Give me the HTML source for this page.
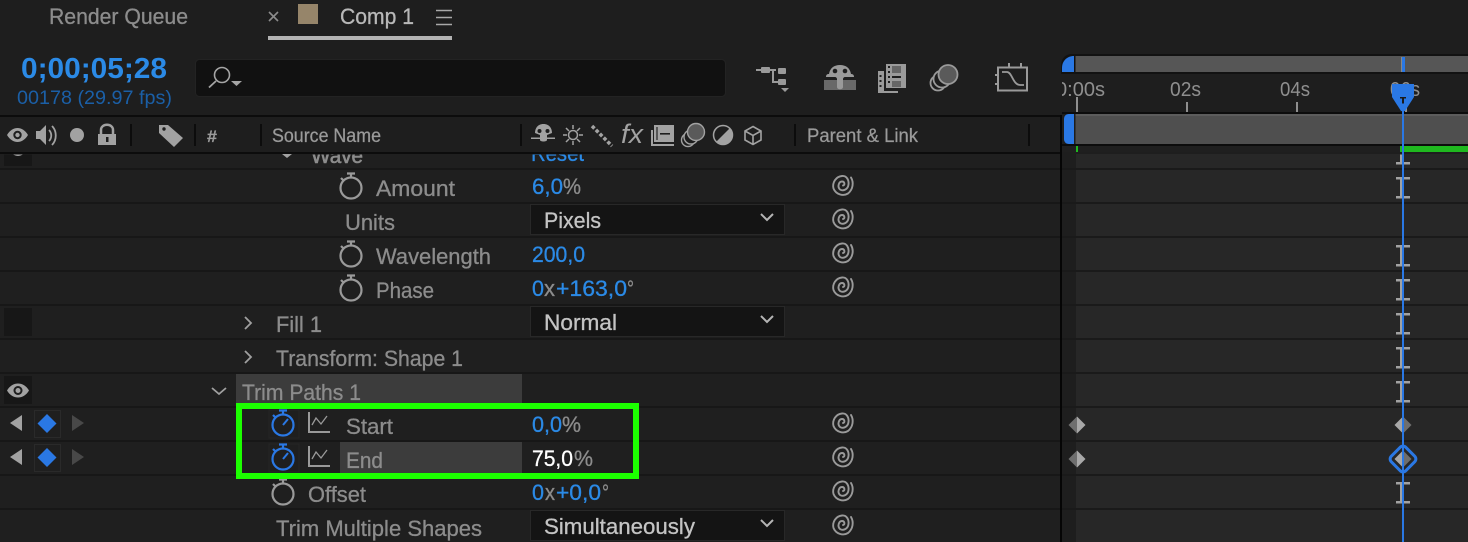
<!DOCTYPE html>
<html><head><meta charset="utf-8"><style>
html,body{margin:0;padding:0;background:#1e1e1e;width:1468px;height:542px;overflow:hidden}
svg{display:block}
text{font-family:"Liberation Sans",sans-serif;font-size:22px}
.g{fill:#8c8c8c;stroke:#8c8c8c;stroke-width:.3}.l{fill:#c4c4c4;stroke:#c4c4c4;stroke-width:.3}.b{fill:#2b8ae6;stroke:#2b8ae6;stroke-width:.3}.d{fill:#9a9a9a;stroke:#9a9a9a;stroke-width:.25}
</style></head><body>
<svg width="1468" height="542" viewBox="0 0 1468 542" xmlns="http://www.w3.org/2000/svg">
<defs>
<g id="sw" fill="none" stroke-width="2.200"><circle cx="0" cy="1" r="10.500"/><path d="M-4 -13.500H4M0 -13.500V-9M-10 -9L-7 -6"/></g>
<g id="sp" fill="none" stroke="#9a9a9a" stroke-width="1.900" stroke-linecap="round"><path d="M8 -8C11 -3 10 4 5 8C0 11 -7 9 -9.500 3C-11 -3 -7 -9 -1 -9.500C4 -10 6 -5 5.500 -1C5 4 0 6 -3 4C-6 1 -4 -4 -1 -4C2 -4 2 0 0 0"/></g>
<g id="ib"><rect x="-7" y="-10" width="14" height="2.500" fill="#a2a2a2"/><rect x="-7" y="9" width="14" height="2.500" fill="#a2a2a2"/><rect x="-3" y="-10" width="3" height="21" fill="#a2a2a2"/></g>
<g id="dd"><rect x="530.500" y="0.500" width="254" height="30" fill="#141414" stroke="#282828"/><path d="M761 10l6 6 6-6" fill="none" stroke="#b5b5b5" stroke-width="2"/></g>
<g id="gr" fill="none" stroke="#9a9a9a" stroke-width="2"><path d="M1 -11V9H22"/><path d="M4 2L8 -5L13 1L19 -7" stroke-width="1.300"/></g>
</defs>

<rect width="1468" height="542" fill="#1e1e1e"/>

<!-- tabs -->
<text x="49" y="24" class="g" textLength="139" lengthAdjust="spacingAndGlyphs">Render Queue</text>
<path d="M269 12l9 9M278 12l-9 9" stroke="#8c8c8c" stroke-width="1.600"/>
<rect x="298" y="4" width="20" height="20" fill="#96856a"/>
<text x="340" y="24" style="fill:#b8b8b8;stroke:#b8b8b8;stroke-width:.3" textLength="74" lengthAdjust="spacingAndGlyphs">Comp 1</text>
<path d="M436 10.500h16M436 17.500h16M436 24.500h16" stroke="#a8a8a8" stroke-width="1.600"/>
<rect x="268" y="36" width="184" height="4" fill="#b3b3b3"/>

<!-- time -->
<text x="21" y="78" font-weight="bold" style="font-size:29px" fill="#2b8ae6" textLength="146" lengthAdjust="spacingAndGlyphs">0;00;05;28</text>
<text x="17" y="104" style="font-size:19px" fill="#1b5fa6" textLength="155" lengthAdjust="spacingAndGlyphs">00178 (29.97 fps)</text>

<!-- search -->
<rect x="195.500" y="59.500" width="530" height="37" rx="4" fill="#111" stroke="#232323"/>
<circle cx="222" cy="75" r="7.500" fill="none" stroke="#a5a5a5" stroke-width="1.600"/>
<path d="M216 81l-7 6.500" stroke="#a5a5a5" stroke-width="1.800"/>
<path d="M231 81h11l-5.500 5z" fill="#a5a5a5"/>

<!-- toolbar icons -->
<g fill="#9a9a9a">
<path d="M756 70h6M770 70h6M773 70v12h6" fill="none" stroke="#9a9a9a" stroke-width="2"/>
<rect x="761" y="67" width="9" height="6" rx="1"/><rect x="778" y="68" width="8" height="6" rx="1"/><rect x="778" y="79" width="8" height="6" rx="1"/>
<path d="M781 88h8l-4 4z"/>
<rect x="824" y="80" width="32" height="10" fill="#696969"/>
<path d="M826 77c0-3 2-3 3-3c1-6 5-9 11-9s10 3 11 9c2 0 3 1 3 3h-9c-1 0-2 1-2 2v8c0 3-6 3-6 0v-8c0-1-1-2-2-2z"/>
<circle cx="835" cy="71" r="2.300" fill="#1e1e1e"/><circle cx="845" cy="71" r="2.300" fill="#1e1e1e"/>
<rect x="886" y="64" width="20" height="24"/>
<path d="M878 71h6v20h14v2h-20z"/><rect x="878" y="71" width="6" height="22"/>
<path d="M892 76h9v2h-9z" fill="#1e1e1e"/><rect x="892" y="66" width="9" height="7" fill="#666"/><rect x="892" y="81" width="9" height="6" fill="#666"/>
<rect x="888" y="66" width="2" height="2" fill="#1e1e1e"/><rect x="888" y="71" width="2" height="2" fill="#1e1e1e"/><rect x="888" y="76" width="2" height="2" fill="#1e1e1e"/><rect x="888" y="81" width="2" height="2" fill="#1e1e1e"/>
<rect x="879.500" y="75" width="2" height="2" fill="#1e1e1e"/><rect x="879.500" y="80" width="2" height="2" fill="#1e1e1e"/><rect x="879.500" y="85" width="2" height="2" fill="#1e1e1e"/>
</g>
<g fill="#1e1e1e" stroke="#9a9a9a" stroke-width="1.800"><circle cx="938" cy="83" r="7.500"/><circle cx="942" cy="79" r="8.500"/></g>
<circle cx="948" cy="74.500" r="9.500" fill="#5a5a5a" stroke="#9a9a9a" stroke-width="1.800"/>
<g fill="none" stroke="#9a9a9a" stroke-width="2"><rect x="998" y="67.500" width="29" height="23"/><path d="M1002 72h5c5 0 6 13 13 13h4" stroke-width="1.800"/><path d="M1009 63v4M1021 63v4M995 75h3M995 84h3"/></g>

<!-- header bar -->
<rect x="0" y="115" width="1062" height="2" fill="#0c0c0c"/>
<rect x="0" y="152" width="1468" height="2.500" fill="#0c0c0c"/>
<g fill="#0c0c0c"><rect x="130" y="124" width="2" height="22"/><rect x="194" y="124" width="2" height="22"/><rect x="260" y="124" width="2" height="22"/><rect x="520" y="124" width="2" height="22"/><rect x="794" y="124" width="2" height="22"/><rect x="1028" y="124" width="2" height="22"/></g>
<!-- eye -->
<path d="M7 135c3-5 7-7 10.500-7s7.500 2 10.500 7c-3 5-7 7-10.500 7s-7.500-2-10.500-7z" fill="#a2a2a2"/><circle cx="17.500" cy="135" r="4.200" fill="#1e1e1e"/><circle cx="17.500" cy="135" r="2.200" fill="#a2a2a2"/>
<!-- audio -->
<path d="M36 131h4l6-6v20l-6-6h-4z" fill="#a2a2a2"/><path d="M49 130c3 3 3 8 0 11M52 126c5 5 5 14 0 19" fill="none" stroke="#a2a2a2" stroke-width="1.800"/>
<circle cx="77" cy="135" r="7" fill="#a2a2a2"/>
<path d="M98 134h18v11h-18z" fill="#a2a2a2"/><path d="M101 134v-4c0-7 12-7 12 0v4" fill="none" stroke="#a2a2a2" stroke-width="2.500"/><rect x="106" y="137" width="2.500" height="5" fill="#1e1e1e"/>
<!-- tag -->
<path d="M159 125h9l15 13l-9 9l-15-14z" fill="#a2a2a2"/><circle cx="164" cy="129" r="1.700" fill="#1e1e1e"/>
<text x="207" y="142" class="d" style="font-size:17px" font-weight="bold" textLength="10" lengthAdjust="spacingAndGlyphs">#</text>
<text x="272" y="142" class="d" style="font-size:19px" textLength="109" lengthAdjust="spacingAndGlyphs">Source Name</text>
<text x="807" y="142" class="d" style="font-size:19px" textLength="111" lengthAdjust="spacingAndGlyphs">Parent &amp; Link</text>
<!-- switch icons -->
<g fill="#a2a2a2">
<path d="M535 133c0-6 4-9 8.500-9s8.500 3 8.500 9l-5 2v5c0 2-7 2-7 0v-5z"/><circle cx="539.500" cy="131" r="2" fill="#1e1e1e"/><circle cx="547.500" cy="131" r="2" fill="#1e1e1e"/><rect x="531" y="137.500" width="9" height="1.500"/><rect x="546" y="137.500" width="9" height="1.500"/>
</g>
<g stroke="#a2a2a2" stroke-width="1.500" fill="none"><circle cx="573" cy="135" r="4.500"/><path d="M573 125v4M573 141v4M563 135h4M579 135h4M566 128l3 3M577 139l3 3M580 128l-3 3M569 139l-3 3"/></g>
<path d="M592 126l20 20" stroke="#a2a2a2" stroke-width="3.500" stroke-dasharray="3.500 2"/>
<text x="621" y="143" fill="#a2a2a2" font-style="italic" style="font-size:27px" textLength="22" lengthAdjust="spacingAndGlyphs">fx</text>
<g fill="#a2a2a2"><rect x="654" y="125" width="20" height="17"/><path d="M651 130h2v14h21v2h-23z"/><rect x="660" y="133" width="10" height="1.600" fill="#1e1e1e"/><rect x="656" y="127" width="2" height="13" fill="#555"/></g>
<g fill="#1e1e1e" stroke="#a2a2a2" stroke-width="1.400"><circle cx="688" cy="140" r="6.500"/><circle cx="691" cy="137" r="7"/></g>
<circle cx="696" cy="132" r="8.500" fill="#5a5a5a" stroke="#a2a2a2" stroke-width="1.400"/>
<circle cx="723" cy="135" r="9.500" fill="#a2a2a2"/><path d="M716.500 141.500a9.200 9.200 0 0 1 13-13z" fill="#1e1e1e"/><circle cx="723" cy="135" r="9.500" fill="none" stroke="#a2a2a2" stroke-width="1.500"/>
<path d="M753 126.500l8 4.500v9l-8 4.500l-8-4.500v-9zM745 131l8 4.500l8-4.500M753 135.500v9" fill="none" stroke="#a2a2a2" stroke-width="1.600"/>

<!-- left rows bg -->
<rect x="0" y="154" width="1060" height="388" fill="#1f1f1f"/>
<g fill="#171717">
<rect x="0" y="168" width="1060" height="2"/><rect x="0" y="202" width="1060" height="2"/><rect x="0" y="236" width="1060" height="2"/><rect x="0" y="270" width="1060" height="2"/><rect x="0" y="304" width="1060" height="2"/><rect x="0" y="338" width="1060" height="2"/><rect x="0" y="372" width="1060" height="2"/><rect x="0" y="406" width="1060" height="2"/><rect x="0" y="440" width="1060" height="2"/><rect x="0" y="474" width="1060" height="2"/><rect x="0" y="508" width="1060" height="2"/>
</g>
<!-- clipped row -->
<clipPath id="c1"><rect x="0" y="154.500" width="1060" height="14"/></clipPath>
<g clip-path="url(#c1)">
<rect x="4" y="154" width="28" height="12" fill="#171717"/>
<path d="M8 149c3-5 7-7 10-7s7 2 10 7c-3 5-7 7-10 7s-7-2-10-7z" fill="#a2a2a2"/>
<text x="311" y="163" class="g" style="font-size:21px;stroke-width:.6" textLength="52" lengthAdjust="spacingAndGlyphs">Wave</text>
<text x="531" y="161" class="b" textLength="53" lengthAdjust="spacingAndGlyphs">Reset</text>
</g>
<path d="M282 154h10l-5 4z" fill="#a2a2a2"/>

<!-- row boxes -->
<rect x="4" y="308" width="28" height="28" fill="#171717"/>
<rect x="4" y="376" width="28" height="28" fill="#171717"/>
<path d="M7 390.500c3-5 7-7 11-7s8 2 11 7c-3 5-7 7-11 7s-8-2-11-7z" fill="#a2a2a2"/><circle cx="18" cy="390.500" r="4.500" fill="#1e1e1e"/><circle cx="18" cy="390.500" r="2.500" fill="#a2a2a2"/>

<!-- stopwatches -->
<use href="#sw" x="351" y="187" stroke="#9a9a9a"/>
<use href="#sw" x="351" y="255" stroke="#9a9a9a"/>
<use href="#sw" x="351" y="289" stroke="#9a9a9a"/>
<use href="#sw" x="283" y="493" stroke="#9a9a9a"/>

<!-- labels -->
<text x="376" y="196" class="g" textLength="79" lengthAdjust="spacingAndGlyphs">Amount</text>
<text x="345" y="230" class="g" textLength="50" lengthAdjust="spacingAndGlyphs">Units</text>
<text x="376" y="264" class="g" textLength="115" lengthAdjust="spacingAndGlyphs">Wavelength</text>
<text x="376" y="298" class="g" textLength="58" lengthAdjust="spacingAndGlyphs">Phase</text>
<text x="276" y="332" class="g" textLength="46" lengthAdjust="spacingAndGlyphs">Fill 1</text>
<text x="276" y="366" class="g" textLength="187" lengthAdjust="spacingAndGlyphs">Transform: Shape 1</text>
<path d="M245 317l6 6-6 6M245 351l6 6-6 6" fill="none" stroke="#a0a0a0" stroke-width="1.800"/>
<path d="M212 388l7 6 7-6" fill="none" stroke="#a0a0a0" stroke-width="1.800"/>

<!-- values -->
<text x="532" y="194" class="b" textLength="31" lengthAdjust="spacingAndGlyphs">6,0</text>
<text x="563" y="194" class="g" textLength="18" lengthAdjust="spacingAndGlyphs">%</text>
<text x="532" y="262" class="b" textLength="53" lengthAdjust="spacingAndGlyphs">200,0</text>
<text x="532" y="296" class="b" textLength="12" lengthAdjust="spacingAndGlyphs">0</text>
<text x="544" y="296" class="g" textLength="11" lengthAdjust="spacingAndGlyphs">x</text>
<text x="556" y="296" class="b" textLength="71" lengthAdjust="spacingAndGlyphs">+163,0</text>
<text x="627" y="296" class="g" textLength="7" lengthAdjust="spacingAndGlyphs">°</text>

<!-- dropdowns -->
<use href="#dd" y="204"/>
<text x="544" y="228" class="l" textLength="57" lengthAdjust="spacingAndGlyphs">Pixels</text>
<use href="#dd" y="306"/>
<text x="544" y="330" class="l" textLength="73" lengthAdjust="spacingAndGlyphs">Normal</text>
<use href="#dd" y="510"/>
<text x="544" y="534" class="l" textLength="151" lengthAdjust="spacingAndGlyphs">Simultaneously</text>

<!-- trim paths -->
<rect x="236" y="374" width="286" height="32" fill="#3c3c3c"/>
<text x="242" y="400" class="g" textLength="119" lengthAdjust="spacingAndGlyphs">Trim Paths 1</text>

<!-- keyframe nav -->
<path d="M22 415v16l-12-8zM22 449v16l-12-8z" fill="#a2a2a2"/>
<path d="M72 415v16l12-8zM72 449v16l12-8z" fill="#484848"/>
<rect x="34.500" y="410.500" width="26" height="27" fill="none" stroke="#2a2a2a"/>
<rect x="34.500" y="444.500" width="26" height="27" fill="none" stroke="#2a2a2a"/>
<path d="M47 414l9.500 9.500-9.500 9.500-9.500-9.500zM47 448l9.500 9.500-9.500 9.500-9.500-9.500z" fill="#2a78e4"/>

<!-- highlighted -->
<rect x="340" y="442" width="182" height="32" fill="#3c3c3c"/>
<rect x="269" y="410" width="30" height="28" fill="none" stroke="#262626"/>
<rect x="269" y="444" width="30" height="28" fill="none" stroke="#262626"/>
<use href="#sw" x="283" y="424" stroke="#2a78e4"/>
<use href="#sw" x="283" y="458" stroke="#2a78e4"/>
<path d="M283 425l5-6M283 459l5-6" stroke="#2a78e4" stroke-width="2"/>
<use href="#gr" x="308" y="423"/>
<use href="#gr" x="308" y="457"/>
<text x="346" y="434" class="g" textLength="47" lengthAdjust="spacingAndGlyphs">Start</text>
<text x="346" y="468" class="g" textLength="37" lengthAdjust="spacingAndGlyphs">End</text>
<text x="532" y="432" class="b" textLength="30" lengthAdjust="spacingAndGlyphs">0,0</text>
<text x="562" y="432" class="g" textLength="19" lengthAdjust="spacingAndGlyphs">%</text>
<text x="532" y="466" style="fill:#fff;stroke:#fff;stroke-width:.3" textLength="41" lengthAdjust="spacingAndGlyphs">75,0</text>
<text x="574" y="466" class="g" textLength="19" lengthAdjust="spacingAndGlyphs">%</text>
<text x="308" y="502" class="g" textLength="58" lengthAdjust="spacingAndGlyphs">Offset</text>
<text x="532" y="500" class="b" textLength="12" lengthAdjust="spacingAndGlyphs">0</text>
<text x="545" y="500" class="g" textLength="10" lengthAdjust="spacingAndGlyphs">x</text>
<text x="556" y="500" class="b" textLength="45" lengthAdjust="spacingAndGlyphs">+0,0</text>
<text x="602" y="500" class="g" textLength="7" lengthAdjust="spacingAndGlyphs">°</text>
<text x="276" y="536" class="g" textLength="206" lengthAdjust="spacingAndGlyphs">Trim Multiple Shapes</text>

<!-- green box -->
<rect x="239" y="406" width="397" height="70" fill="none" stroke="#1cff00" stroke-width="6"/>

<!-- spirals -->
<use href="#sp" x="843" y="185.500"/><use href="#sp" x="843" y="219"/><use href="#sp" x="843" y="253"/><use href="#sp" x="843" y="287"/><use href="#sp" x="843" y="423"/><use href="#sp" x="843" y="457"/><use href="#sp" x="843" y="491"/><use href="#sp" x="843" y="525"/>

<!-- timeline right -->
<rect x="1060" y="40" width="408" height="114" fill="#1e1e1e"/>
<rect x="1060" y="115" width="2" height="427" fill="#050505"/>
<rect x="1062" y="154" width="406" height="388" fill="#272727"/>
<rect x="1062" y="154" width="14" height="388" fill="#1e1e1e"/>
<g fill="#1a1a1a">
<rect x="1062" y="168" width="406" height="2"/><rect x="1062" y="202" width="406" height="2"/><rect x="1062" y="236" width="406" height="2"/><rect x="1062" y="270" width="406" height="2"/><rect x="1062" y="304" width="406" height="2"/><rect x="1062" y="338" width="406" height="2"/><rect x="1062" y="372" width="406" height="2"/><rect x="1062" y="406" width="406" height="2"/><rect x="1062" y="440" width="406" height="2"/><rect x="1062" y="474" width="406" height="2"/><rect x="1062" y="508" width="406" height="2"/>
</g>
<!-- nav bar -->
<path d="M1061 72v-6c0-7 4-12 11-12h396v20h-407z" fill="#121212"/>
<rect x="1075.500" y="56" width="393" height="16" fill="#565656"/>
<path d="M1074 56v16h-12v-4c0-7 5-12 12-12z" fill="#2a78e4"/>
<rect x="1401" y="57" width="2" height="15" fill="#888"/><rect x="1403" y="57" width="2" height="15" fill="#2a78e4"/>
<!-- ruler -->
<clipPath id="c2"><rect x="1062" y="70" width="406" height="40"/></clipPath>
<g clip-path="url(#c2)" fill="#8f8f8f" style="font-size:20px">
<text x="1056" y="96" style="font-size:20px" textLength="49" lengthAdjust="spacingAndGlyphs">0:00s</text>
<text x="1170" y="96" style="font-size:20px" textLength="31" lengthAdjust="spacingAndGlyphs">02s</text>
<text x="1280" y="96" style="font-size:20px" textLength="30" lengthAdjust="spacingAndGlyphs">04s</text>
<text x="1390" y="96" style="font-size:20px" textLength="30" lengthAdjust="spacingAndGlyphs">06s</text>
</g>
<g fill="#8f8f8f"><rect x="1076" y="97" width="2" height="15"/><rect x="1186" y="102" width="2" height="10"/><rect x="1296" y="102" width="2" height="10"/><rect x="1405" y="102" width="2" height="10"/></g>
<!-- work bar -->
<rect x="1062" y="112" width="406" height="2" fill="#0c0c0c"/>
<rect x="1075.500" y="114" width="393" height="30" fill="#4f4f4f"/>
<rect x="1075.500" y="114" width="393" height="2" fill="#5c5c5c"/>
<path d="M1074 114v30h-5c-3 0-5-2-5-5v-20c0-3 2-5 5-5z" fill="#2a78e4"/>
<rect x="1062" y="144" width="406" height="2" fill="#0c0c0c"/>
<rect x="1062" y="146" width="406" height="6" fill="#1f1f1f"/>
<rect x="1076" y="146" width="2" height="6" fill="#1fb81f"/>
<rect x="1400" y="146" width="68" height="6" fill="#1fb81f"/>

<!-- I-beams -->
<clipPath id="c3"><rect x="1062" y="154.500" width="406" height="388"/></clipPath>
<g clip-path="url(#c3)">
<use href="#ib" x="1403" y="153"/><use href="#ib" x="1403" y="187"/><use href="#ib" x="1403" y="255"/><use href="#ib" x="1403" y="289"/><use href="#ib" x="1403" y="323"/><use href="#ib" x="1403" y="357"/><use href="#ib" x="1403" y="391"/><use href="#ib" x="1403" y="492"/>
</g>

<!-- keyframes -->
<path d="M1077 416.500v17l-8.500-8.500z" fill="#6e6e6e"/><path d="M1077 416.500v17l8.500-8.500z" fill="#a8a8a8"/>
<path d="M1077 450.500v17l-8.500-8.500z" fill="#6e6e6e"/><path d="M1077 450.500v17l8.500-8.500z" fill="#a8a8a8"/>
<path d="M1403 416.500v17l-8.500-8.500z" fill="#a8a8a8"/><path d="M1403 416.500v17l8.500-8.500z" fill="#6e6e6e"/>
<path d="M1403 450.500v17l-8.500-8.500z" fill="#a8a8a8"/><path d="M1403 450.500v17l8.500-8.500z" fill="#6e6e6e"/>

<!-- playhead -->
<rect x="1402" y="108" width="2" height="434" fill="#2a78e4"/>
<rect x="1402" y="57" width="2" height="15" fill="#2a78e4"/>
<path d="M1392 84h22v13l-9 14h-4l-9-14z" fill="#2a78e4"/>
<path d="M1400 97h6v1.500h-2v5h-2v-5h-2z" fill="#1a1a1a"/>
<rect x="1392.750" y="448.750" width="20.500" height="20.500" rx="4" transform="rotate(45 1403 459)" fill="none" stroke="#2a78e4" stroke-width="3"/>
</svg>
</body></html>
